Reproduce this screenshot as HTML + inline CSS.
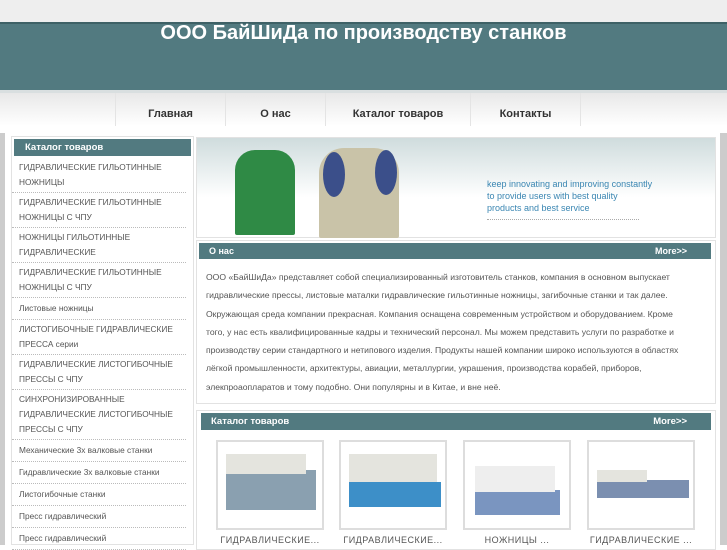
<!DOCTYPE html>
<html><head><meta charset="utf-8"><style>
*{margin:0;padding:0;box-sizing:border-box}
body{width:727px;height:545px;overflow:hidden;background:#fff;font-family:"Liberation Sans",sans-serif;position:relative}
.a{position:absolute}
.hd{background:#527a80;color:#fff}
.side div{font-size:8.3px;color:#555;line-height:15px;padding:2px 7px;border-bottom:1px dotted #bbb;margin:0 6px 0 0}
.side div.s{line-height:17px}
.nav span{position:absolute;top:0;height:33px;line-height:43px;font-size:11px;font-weight:bold;color:#333;text-align:center;border-left:1px solid #e4e4e4}
.prod{position:absolute;top:440px;width:108px;height:90px;border:2px solid #ddd;background:#fff}
.cap{position:absolute;top:535px;width:120px;text-align:center;font-size:9px;color:#555;letter-spacing:.5px}
</style></head><body>
<div class="a" style="left:0;top:0;width:727px;height:22px;background:#eee"></div>
<div class="a hd" style="left:0;top:22px;width:727px;height:68px;border-top:2px solid #3e6166"></div>
<div class="a" style="left:0;top:18px;width:727px;text-align:center;font-size:20px;font-weight:bold;color:#fff;line-height:30px;padding-left:0">ООО БайШиДа по производству станков</div>
<div class="a" style="left:0;top:90px;width:727px;height:3px;background:#d9dfe0"></div>
<div class="a nav" style="left:0;top:93px;width:727px;height:33px;background:linear-gradient(#e8e8e8,#fff)">
<span style="left:115px;width:110px">Главная</span>
<span style="left:225px;width:100px">О нас</span>
<span style="left:325px;width:145px">Каталог товаров</span>
<span style="left:470px;width:110px">Контакты</span>
<span style="left:580px;width:1px"></span>
</div>
<div class="a" style="left:0;top:133px;width:5px;height:412px;background:#ccc"></div>
<div class="a" style="left:720px;top:133px;width:7px;height:412px;background:#ccc"></div>
<div class="a" style="left:11px;top:136px;width:183px;height:409px;border:1px solid #e2e2e2"></div>
<div class="a hd" style="left:14px;top:139px;width:177px;height:17px;font-size:9.5px;font-weight:bold;line-height:17px;padding-left:11px">Каталог товаров</div>
<div class="a side" style="left:12px;top:158px;width:180px">
<div>ГИДРАВЛИЧЕСКИЕ ГИЛЬОТИННЫЕ НОЖНИЦЫ</div>
<div>ГИДРАВЛИЧЕСКИЕ ГИЛЬОТИННЫЕ НОЖНИЦЫ С ЧПУ</div>
<div>НОЖНИЦЫ ГИЛЬОТИННЫЕ ГИДРАВЛИЧЕСКИЕ</div>
<div>ГИДРАВЛИЧЕСКИЕ ГИЛЬОТИННЫЕ НОЖНИЦЫ С ЧПУ</div>
<div class="s">Листовые ножницы</div>
<div>ЛИСТОГИБОЧНЫЕ ГИДРАВЛИЧЕСКИЕ ПРЕССА серии</div>
<div>ГИДРАВЛИЧЕСКИЕ ЛИСТОГИБОЧНЫЕ ПРЕССЫ С ЧПУ</div>
<div>СИНХРОНИЗИРОВАННЫЕ ГИДРАВЛИЧЕСКИЕ ЛИСТОГИБОЧНЫЕ ПРЕССЫ С ЧПУ</div>
<div class="s">Механические 3х валковые станки</div>
<div class="s">Гидравлические 3х валковые станки</div>
<div class="s">Листогибочные станки</div>
<div class="s">Пресс гидравлический</div>
<div class="s">Пресс гидравлический</div>
</div>
<div class="a" style="left:196px;top:137px;width:520px;height:101px;border:1px solid #e2e2e2;background:linear-gradient(#cfdcdd,#fff 60%)">
<div class="a" style="left:38px;top:12px;width:60px;height:85px;background:#2f8a45;border-radius:20px 20px 2px 2px"></div>
<div class="a" style="left:122px;top:10px;width:80px;height:90px;background:#c9c3a8;border-radius:25px 25px 2px 2px"></div>
<div class="a" style="left:126px;top:14px;width:22px;height:45px;background:#3b4f8a;border-radius:50%"></div>
<div class="a" style="left:178px;top:12px;width:22px;height:45px;background:#3b4f8a;border-radius:50%"></div>
<div class="a" style="left:290px;top:40px;font-size:9px;color:#3a86b2;line-height:12px">keep innovating and improving constantly<br>to provide users with best quality<br>products and best service</div>
<div class="a" style="left:290px;top:81px;width:152px;border-top:1px dotted #aaa"></div>
</div>
<div class="a" style="left:196px;top:240px;width:520px;height:164px;border:1px solid #e2e2e2"></div>
<div class="a hd" style="left:199px;top:243px;width:512px;height:16px;font-size:9px;font-weight:bold;line-height:16px;padding-left:10px">О нас<span style="position:absolute;right:24px">More&gt;&gt;</span></div>
<div class="a" style="left:206px;top:268px;width:510px;font-size:8.6px;color:#555;line-height:18.3px;white-space:nowrap">ООО «БайШиДа» представляет собой специализированный изготовитель станков, компания в основном выпускает<br>гидравлические прессы, листовые маталки гидравлические гильотинные ножницы, загибочные станки и так далее.<br>Окружающая среда компании прекрасная. Компания оснащена современным устройством и оборудованием. Кроме<br>того, у нас есть квалифицированные кадры и технический персонал. Мы можем представить услуги по разработке и<br>производству серии стандартного и нетипового изделия. Продукты нашей компании широко используются в областях<br>лёгкой промышленности, архитектуры, авиации, металлургии, украшения, производства корабей, приборов,<br>элекпроаопларатов и тому подобно. Они популярны и в Китае, и вне неё.</div>
<div class="a" style="left:196px;top:410px;width:520px;height:140px;border:1px solid #e2e2e2"></div>
<div class="a hd" style="left:201px;top:413px;width:510px;height:17px;font-size:9.5px;font-weight:bold;line-height:17px;padding-left:10px">Каталог товаров<span style="position:absolute;right:24px">More&gt;&gt;</span></div>
<div class="prod" style="left:216px"><div class="a" style="left:8px;top:28px;width:90px;height:40px;background:#8aa0b0"></div><div class="a" style="left:8px;top:12px;width:80px;height:20px;background:#e4e4de"></div></div>
<div class="prod" style="left:339px"><div class="a" style="left:8px;top:40px;width:92px;height:25px;background:#3d8fc8"></div><div class="a" style="left:8px;top:12px;width:88px;height:28px;background:#e4e4de"></div></div>
<div class="prod" style="left:463px"><div class="a" style="left:10px;top:48px;width:85px;height:25px;background:#7a95c0"></div><div class="a" style="left:10px;top:24px;width:80px;height:26px;background:#eee"></div></div>
<div class="prod" style="left:587px"><div class="a" style="left:8px;top:38px;width:92px;height:18px;background:#7b8fb0"></div><div class="a" style="left:8px;top:28px;width:50px;height:12px;background:#e4e4de"></div></div>
<div class="cap" style="left:210px">ГИДРАВЛИЧЕСКИЕ...</div>
<div class="cap" style="left:333px">ГИДРАВЛИЧЕСКИЕ...</div>
<div class="cap" style="left:457px">НОЖНИЦЫ ...</div>
<div class="cap" style="left:581px">ГИДРАВЛИЧЕСКИЕ ...</div>
</body></html>
